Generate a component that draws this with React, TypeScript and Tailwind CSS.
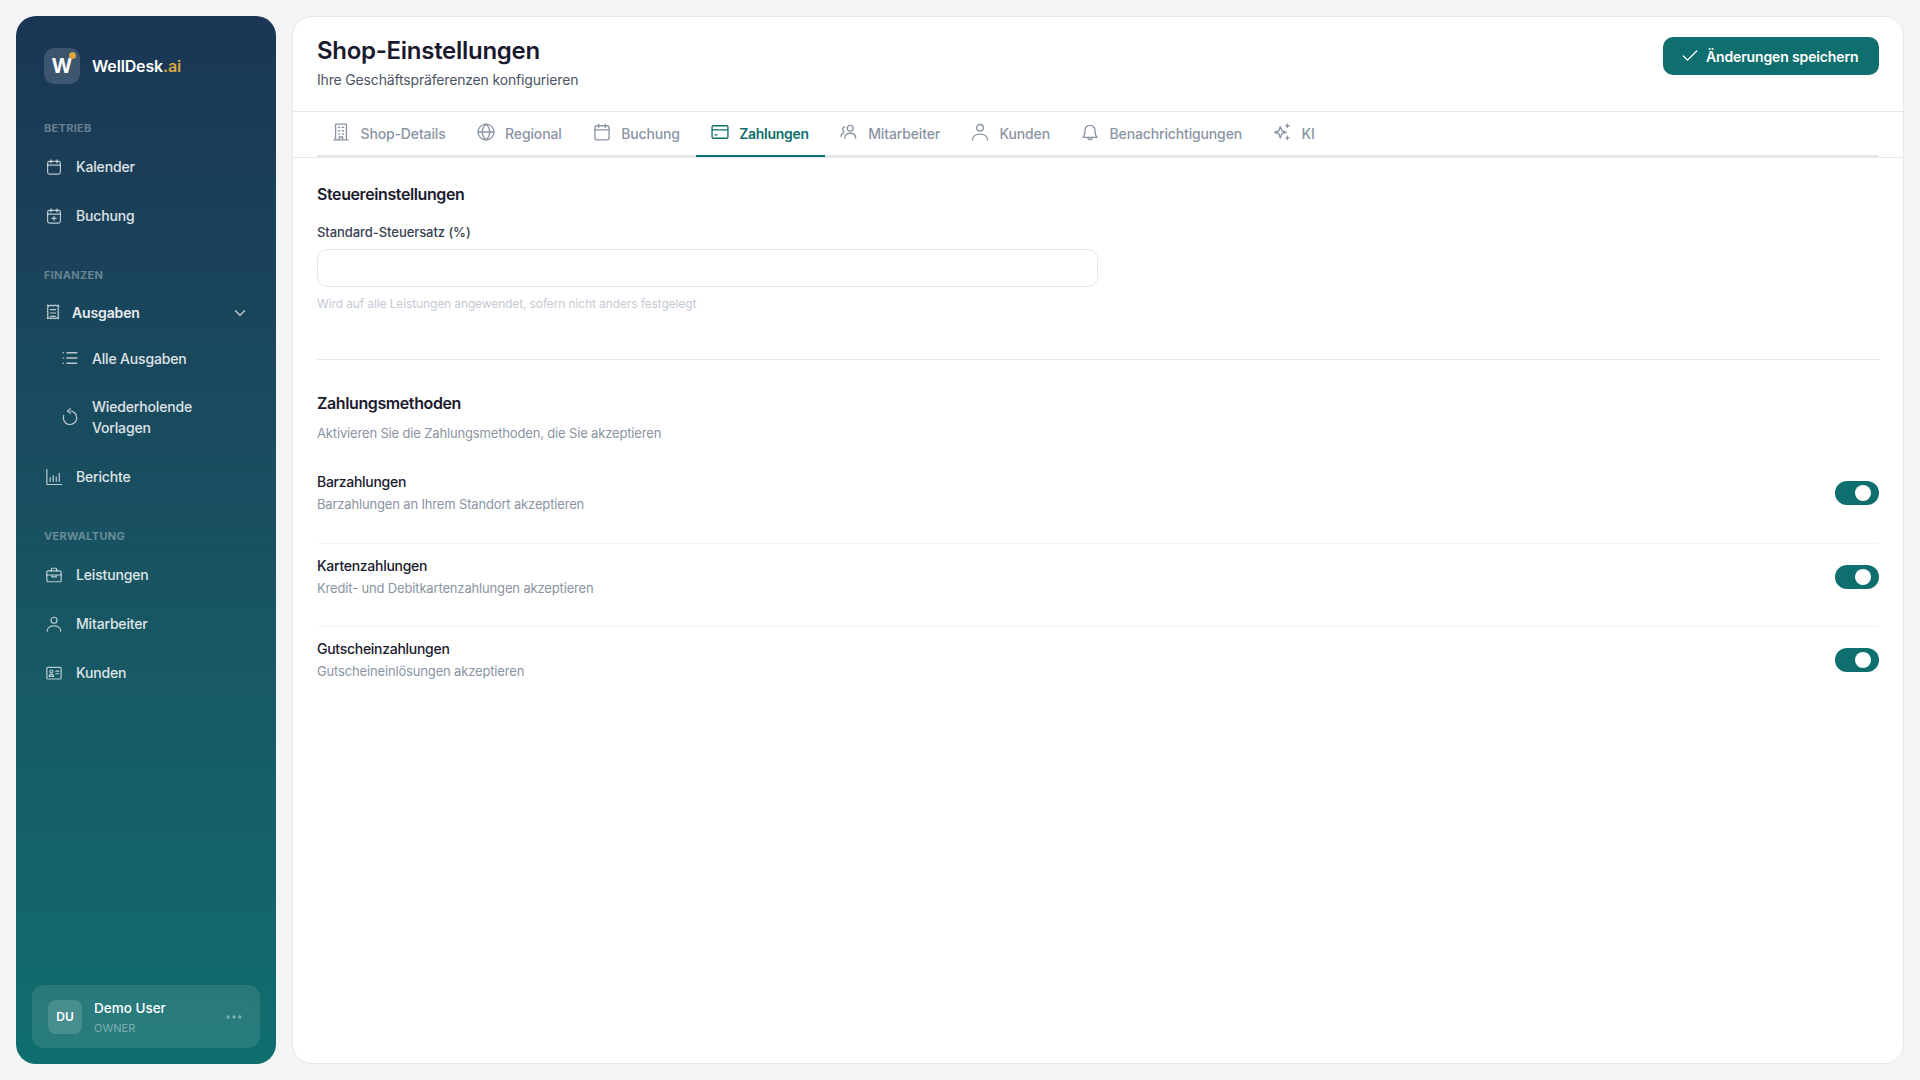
import type { ReactNode } from "react";
import { ChevronDown, Check, MoreHorizontal, List } from "lucide-react";

function Ico({ size = 18, children, sw = 1.6 }: { size?: number; children: ReactNode; sw?: number }) {
  return (
    <svg width={size} height={size} viewBox="0 0 24 24" fill="none" stroke="currentColor" strokeWidth={sw} strokeLinecap="round" strokeLinejoin="round">
      {children}
    </svg>
  );
}
const CalendarIcon = ({ size }: { size?: number }) => (
  <Ico size={size}><rect x="3.5" y="4.5" width="17" height="17" rx="2.5" /><path d="M3.5 9.5h17M8 2.5v4M16 2.5v4" /></Ico>
);
const CalendarPlus = ({ size }: { size?: number }) => (
  <Ico size={size}><rect x="3.5" y="4.5" width="17" height="17" rx="2.5" /><path d="M3.5 9.5h17M8 2.5v4M16 2.5v4M12 12.5v5.5M9.2 15.2h5.6" /></Ico>
);
const ReceiptIcon = ({ size }: { size?: number }) => (
  <Ico size={size}><path d="M4.5 1.5l2.5 1 2.5-1 2.5 1 2.5-1 2.5 1 2.5-1v2.5l-1 2 1 2-1 2 1 2-1 2 1 2-1 2 1 1.5l-2.500-1-2.500 1-2.500-1-2.500 1-2.500-1-2.500 1v-1.500l1-2-1-2 1-2-1-2 1-2-1-2 1-2z" /><path d="M8.5 7.5h7M8.5 12h7M8.5 16.5h7" /></Ico>
);
const UndoIcon = ({ size }: { size?: number }) => (
  <Ico size={size}><path d="M12.500.8L8.500 4l4 3.200" /><path d="M12 4A9 9 0 1 1 3.600 9.800" /></Ico>
);
const ChartIcon = ({ size }: { size?: number }) => (
  <Ico size={size}><path d="M2.500 2v20h20M7 13v5M11 10v8M15 12v6M19 7v11" /></Ico>
);
const BriefcaseIcon = ({ size }: { size?: number }) => (
  <Ico size={size}><rect x="2.500" y="6.500" width="19" height="14.500" rx="1.500" /><path d="M8.500 6.500V4a1 1 0 0 1 1-1h5a1 1 0 0 1 1 1v2.500M2.500 12h19M9 12v2.500h6V12" /></Ico>
);
const UserIcon = ({ size }: { size?: number }) => (
  <Ico size={size}><circle cx="12" cy="7" r="4" /><path d="M3 21.500c0-4.500 4-7 9-7s9 2.500 9 7" /></Ico>
);
const CardIdIcon = ({ size }: { size?: number }) => (
  <Ico size={size}><rect x="2.500" y="4.500" width="19" height="15.500" rx="1.500" /><circle cx="8.500" cy="10" r="2" /><path d="M5.500 16.500c.3-2 1.500-3 3-3s2.700 1 3 3zM14.500 9.500h4M14.500 13h4" /></Ico>
);
const BuildingIcon = ({ size }: { size?: number }) => (
  <Ico size={size}><path d="M5.500 21.500v-19h13v19M3.500 21.500h17M9 6.500h1.500M13.500 6.500H15M9 10.500h1.500M13.500 10.500H15M9 14.500h1.500M13.500 14.500H15M10 21.500v-3.500h4v3.500" /></Ico>
);
const GlobeIcon = ({ size }: { size?: number }) => (
  <Ico size={size}><circle cx="12" cy="12" r="9.500" /><path d="M2.500 12h19M12 2.500c-6 5.500-6 13.500 0 19M12 2.500c6 5.500 6 13.500 0 19" /></Ico>
);
const CreditIcon = ({ size }: { size?: number }) => (
  <Ico size={size}><rect x="2.500" y="4.500" width="19" height="15" rx="1.500" /><path d="M2.500 9.500h19M6 15.500h2.500" /></Ico>
);
const UsersIcon = ({ size }: { size?: number }) => (
  <Ico size={size}><circle cx="13.500" cy="7.500" r="3.500" /><path d="M7 19.500c0-4 3-6 6.500-6s6.500 2 6.500 6M6.500 6a3 3 0 0 0-.5 5.500M2.500 17.500c0-2.500 1-4 3-4.500" /></Ico>
);
const BellIcon = ({ size }: { size?: number }) => (
  <Ico size={size}><path d="M6 10a6 6 0 0 1 12 0c0 5 1 7 2.500 8.500h-17C5 17 6 15 6 10z" /><path d="M9.500 18.500a2.500 2.500 0 0 0 5 0" /></Ico>
);
const SparkleIcon = ({ size }: { size?: number }) => (
  <Ico size={size}><path d="M10 5.500l1.800 5 5 1.800-5 1.800-1.800 5-1.800-5-5-1.800 5-1.800zM18.500 2.500v4M16.500 4.500h4M18.500 17v4M16.500 19h4" /></Ico>
);

function NavItem({ icon, label }: { icon: ReactNode; label: string }) {
  return (
    <div className="flex h-[49px] items-center gap-[13px] pl-[13px] text-[14px] font-medium tracking-[-0.012em] text-white/85">
      <span className="flex w-[18px] justify-center text-white/70">{icon}</span>
      <span>{label}</span>
    </div>
  );
}

function Section({ children }: { children: string }) {
  return <div className="px-[12px] text-[11px] font-bold uppercase leading-[16px] tracking-[0.025em] text-white/35">{children}</div>;
}

function Toggle() {
  return (
    <div className="flex h-[24px] w-[44px] items-center justify-end rounded-full bg-[#0f6e6e] pr-[8px]">
      <div className="h-[16px] w-[16px] rounded-full bg-white" />
    </div>
  );
}

function Row({ title, desc, last }: { title: string; desc: string; last?: boolean }) {
  return (
    <div className={`flex items-center justify-between pt-[11px] pb-[27.5px] ${last ? "" : "border-b border-[#f3f4f6]"}`}>
      <div>
        <div className="text-[14px] font-medium leading-[22px] tracking-[-0.02em] text-[#1a1a2e]">{title}</div>
        <div className="text-[13px] leading-[22px] tracking-[-0.012em] text-[#8a94a3]">{desc}</div>
      </div>
      <Toggle />
    </div>
  );
}

const tabs = [
  ["Shop-Details", BuildingIcon],
  ["Regional", GlobeIcon],
  ["Buchung", CalendarIcon],
  ["Zahlungen", CreditIcon],
  ["Mitarbeiter", UsersIcon],
  ["Kunden", UserIcon],
  ["Benachrichtigungen", BellIcon],
  ["KI", SparkleIcon],
] as const;

export default function App() {
  return (
    <div className="flex h-[1080px] w-[1920px] gap-[16px] bg-[#f3f4f6] p-[16px] font-['Inter',sans-serif]">
      <aside className="flex w-[260px] flex-col rounded-[20px] bg-gradient-to-b from-[#1a3654] to-[#0f6e6e] px-[16px]">
        <div className="flex items-center gap-[12px] px-[12px] pt-[32px]">
          <div className="relative flex h-[36px] w-[36px] items-center justify-center rounded-[10px] bg-white/15 text-[20px] font-bold text-white">
            W
            <span className="absolute right-[4px] top-[4px] h-[7px] w-[7px] rounded-full bg-[#d9a441]" />
          </div>
          <div className="-mt-[1px] text-[16px] font-semibold tracking-[-0.01em] text-white">
            WellDesk<span className="text-[#d9a441]">.ai</span>
          </div>
        </div>
        <div className="mt-[36px]"><Section>Betrieb</Section></div>
        <div className="mt-[6px]">
          <NavItem icon={<CalendarIcon size={18} />} label="Kalender" />
          <NavItem icon={<CalendarPlus size={18} />} label="Buchung" />
        </div>
        <div className="mt-[27px]"><Section>Finanzen</Section></div>
        <div className="mt-[5px] flex h-[49px] items-center justify-between pl-[12px] pr-[11px] text-[14px] font-semibold tracking-[-0.01em] text-white/90">
          <div className="flex items-center gap-[10px]">
            <span className="text-white/70"><ReceiptIcon size={18} /></span>
            Ausgaben
          </div>
          <ChevronDown size={18} className="text-white/70" />
        </div>
        <div className="flex h-[42px] items-center gap-[13px] pl-[29px] text-[14px] font-medium tracking-[-0.012em] text-white/85">
          <List size={18} className="text-white/70" />
          Alle Ausgaben
        </div>
        <div className="flex h-[73px] items-center gap-[13px] pl-[29px] pt-[3px] text-[14px] font-medium leading-[21px] tracking-[-0.012em] text-white/85">
          <span className="text-white/70"><UndoIcon size={18} /></span>
          <span>Wiederholende<br />Vorlagen</span>
        </div>
        <NavItem icon={<ChartIcon size={18} />} label="Berichte" />
        <div className="mt-[27px]"><Section>Verwaltung</Section></div>
        <div className="mt-[6px]">
          <NavItem icon={<BriefcaseIcon size={18} />} label="Leistungen" />
          <NavItem icon={<UserIcon size={18} />} label="Mitarbeiter" />
          <NavItem icon={<CardIdIcon size={18} />} label="Kunden" />
        </div>
        <div className="mt-auto mb-[16px] flex h-[63px] items-center gap-[12px] rounded-[12px] bg-white/10 px-[16px]">
          <div className="flex h-[34px] w-[34px] items-center justify-center rounded-[8px] bg-white/15 text-[12px] font-semibold text-white">DU</div>
          <div className="flex-1 pt-[2px]">
            <div className="text-[13.5px] font-medium leading-[20px] text-white">Demo User</div>
            <div className="text-[11px] leading-[20px] text-white/40">OWNER</div>
          </div>
          <MoreHorizontal size={20} className="text-white/40" />
        </div>
      </aside>

      <main className="flex-1 rounded-[20px] border border-[#e5e7eb] bg-white">
        <div className="flex h-[95px] items-start justify-between border-b border-[#e5e7eb] px-[24px] pt-[18px]">
          <div>
            <h1 className="text-[24px] font-semibold leading-[32px] tracking-[-0.012em] text-[#1a1a2e]">Shop-Einstellungen</h1>
            <p className="mt-[3px] text-[14px] leading-[20px] tracking-[-0.012em] text-[#4b5563]">Ihre Geschäftspräferenzen konfigurieren</p>
          </div>
          <button className="mt-[2px] flex h-[38px] w-[216px] items-center gap-[6px] rounded-[10px] bg-[#0f6e6e] pl-[17px] text-[14px] font-semibold tracking-[-0.01em] text-white">
            <Check size={20} strokeWidth={1.5} />
            Änderungen speichern
          </button>
        </div>
        <div className="border-b border-[#e5e7eb] px-[24px]">
          <div className="flex h-[45px] border-b-2 border-[#e5e7eb]">
            {tabs.map(([label, Icon]) => {
              const active = label === "Zahlungen";
              return (
                <div key={label} className={`-mb-[2px] flex items-center gap-[9.5px] border-b-2 px-[16px] text-[14px] ${active ? "border-[#0f6e6e] font-semibold tracking-[-0.022em] text-[#0f6e6e]" : "border-transparent font-medium tracking-[-0.01em] text-[#8a94a3]"}`}>
                  <span className="-ml-[2px] -mt-[3px]"><Icon size={20} /></span>
                  {label}
                </div>
              );
            })}
          </div>
        </div>
        <div className="px-[24px] pt-[24px]">
          <h2 className="text-[16px] font-semibold leading-[24px] tracking-[-0.025em] text-[#1a1a2e]">Steuereinstellungen</h2>
          <label className="mt-[16px] block text-[13px] font-medium leading-[20px] tracking-[-0.005em] text-[#374151]">Standard-Steuersatz (%)</label>
          <input className="mt-[7px] block h-[38px] w-[781px] rounded-[10px] border border-[#e5e7eb]" />
          <p className="mt-[8px] text-[12px] leading-[18px] tracking-[-0.01em] text-[#c4cad4]">Wird auf alle Leistungen angewendet, sofern nicht anders festgelegt</p>
          <div className="mt-[46px] border-t border-[#e5e7eb]" />
          <h2 className="mt-[31px] text-[16px] font-semibold leading-[24px] tracking-[-0.025em] text-[#1a1a2e]">Zahlungsmethoden</h2>
          <p className="mt-[8px] text-[13px] leading-[20px] tracking-[-0.012em] text-[#8a94a3]">Aktivieren Sie die Zahlungsmethoden, die Sie akzeptieren</p>
          <div className="mt-[17px]">
            <Row title="Barzahlungen" desc="Barzahlungen an Ihrem Standort akzeptieren" />
            <Row title="Kartenzahlungen" desc="Kredit- und Debitkartenzahlungen akzeptieren" />
            <Row title="Gutscheinzahlungen" desc="Gutscheineinlösungen akzeptieren" last />
          </div>
        </div>
      </main>
    </div>
  );
}
